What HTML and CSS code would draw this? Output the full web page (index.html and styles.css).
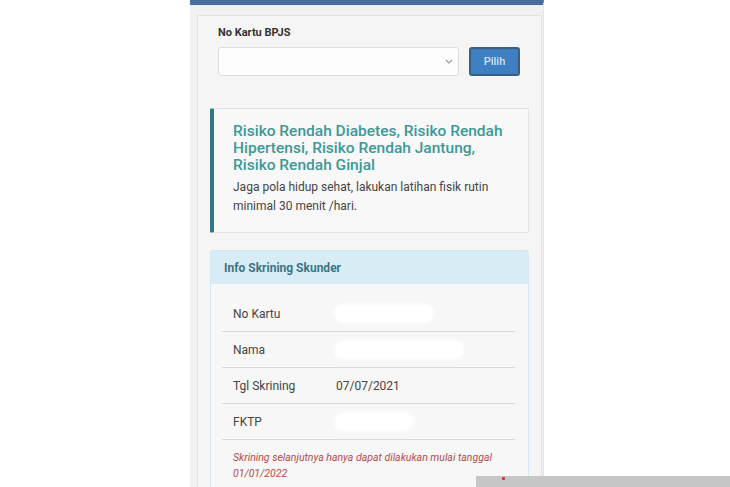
FILE: index.html
```html
<!DOCTYPE html>
<html>
<head>
<meta charset="utf-8">
<link rel="stylesheet" href="styles.css">
</head>
<body>
<div class="screen">
  <div class="card">
    <div class="form">
      <div class="label">No Kartu BPJS</div>
      <div class="row">
        <div class="select">
          <svg class="chev" width="8" height="5" viewBox="0 0 8 5"><path d="M1 1 L4 4 L7 1" fill="none" stroke="#9a9a9a" stroke-width="1.2"/></svg>
        </div>
        <div class="btn">Pilih</div>
      </div>
    </div>
    <div class="alert">
      <div class="alert-title">Risiko Rendah Diabetes, Risiko Rendah Hipertensi, Risiko Rendah Jantung, Risiko Rendah Ginjal</div>
      <div class="alert-text">Jaga pola hidup sehat, lakukan latihan fisik rutin minimal 30 menit /hari.</div>
    </div>
    <div class="panel">
      <div class="panel-head">Info Skrining Skunder</div>
      <div class="panel-body">
        <div class="item"><span class="k">No Kartu</span><span class="blur w96"></span></div>
        <div class="item"><span class="k">Nama</span><span class="blur w126"></span></div>
        <div class="item"><span class="k">Tgl Skrining</span><span class="v">07/07/2021</span></div>
        <div class="item"><span class="k">FKTP</span><span class="blur w76"></span></div>
        <div class="note">Skrining selanjutnya hanya dapat dilakukan mulai tanggal 01/01/2022</div>
      </div>
    </div>
  </div>
</div>
<div class="overlay"><span class="mark"></span></div>
</body>
</html>
```
FILE: styles.css
```css
html, body {
  margin: 0;
  padding: 0;
  background: #ffffff;
  font-family: Roboto, "Liberation Sans", sans-serif;
  overflow: hidden;
}
.screen {
  margin-left: 190px;
  width: 345px;
  height: 482px;
  background: #f1f1f1;
  border-top: 5px solid #4b6d9d;
  border-right: 1px solid #e6e6e6;
  padding: 10px 1px 0 7px;
  box-sizing: content-box;
  overflow: hidden;
}
.card {
  border: 1px solid #e4e4e4;
  background: #f5f5f5;
  height: 480px;
  padding: 0 12px;
  box-sizing: border-box;
  display: flex;
  flex-direction: column;
}
.form {
  padding: 10px 0 0 8px;
}
.label {
  font-size: 11px;
  font-weight: bold;
  color: #333;
  line-height: 14px;
}
.row {
  display: flex;
  gap: 10px;
  margin-top: 7px;
}
.select {
  width: 241px;
  height: 29px;
  background: #fdfdfd;
  border: 1px solid #dedede;
  border-radius: 3px;
  box-sizing: border-box;
  display: flex;
  align-items: center;
  justify-content: flex-end;
  padding-right: 5px;
}
.btn {
  width: 51px;
  height: 29px;
  box-sizing: border-box;
  background: #3d7fc1;
  border: 2px solid #3b5f7c;
  border-radius: 3px;
  color: #d4e3f2;
  font-size: 11px;
  font-weight: 500;
  display: flex;
  align-items: center;
  justify-content: center;
}
.alert {
  margin-top: 32px;
  height: 125px;
  box-sizing: border-box;
  border: 1px solid #e2e2e2;
  border-left: 4px solid #2d7a82;
  border-radius: 2px;
  background: #f8f8f8;
  padding: 14px 8px 0 19px;
}
.alert-title {
  font-size: 15.5px;
  font-weight: 500;
  line-height: 17px;
  color: #3c9898;
}
.alert-text {
  margin-top: 4px;
  font-size: 12px;
  line-height: 19px;
  color: #444;
}
.panel {
  margin-top: 17px;
  border: 1px solid #d6e7f0;
  border-radius: 3px;
  flex: 1;
  background: #f7f7f7;
}
.panel-head {
  height: 33px;
  background: #d8ecf6;
  color: #3b7686;
  font-size: 12px;
  font-weight: bold;
  display: flex;
  align-items: center;
  padding-left: 13px;
}
.panel-body {
  padding: 12px 13px 0 11px;
}
.item {
  height: 36px;
  border-bottom: 1px solid #d9d9d9;
  box-sizing: border-box;
  display: flex;
  align-items: center;
  padding-left: 11px;
  font-size: 12px;
  color: #444;
}
.k {
  width: 103px;
}
.v {
  color: #444;
}
.blur {
  height: 15px;
  background: #ffffff;
  border-radius: 8px;
  box-shadow: 0 0 3px 2px #ffffff;
}
.w96 { width: 96px; }
.w126 { width: 126px; }
.w76 { width: 76px; }
.note {
  padding: 10px 0 0 11px;
  font-size: 10.5px;
  line-height: 16px;
  font-style: italic;
  color: #b84a4a;
}
.overlay {
  position: absolute;
  left: 476px;
  top: 476px;
  width: 254px;
  height: 11px;
  background: #c6c6c6;
}
.mark {
  position: absolute;
  left: 26px;
  top: 1px;
  width: 3px;
  height: 3px;
  background: #c0393b;
  border-radius: 1px;
}
```
